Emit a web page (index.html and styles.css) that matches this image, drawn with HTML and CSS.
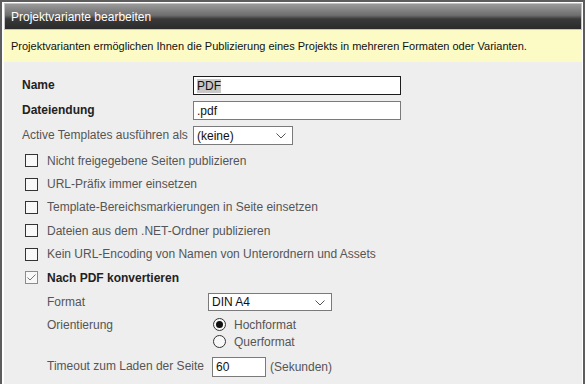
FILE: index.html
```html
<!DOCTYPE html>
<html lang="de">
  <head>
    <meta charset="UTF-8" />
    <title>Projektvariante bearbeiten</title>
    <link rel="stylesheet" href="styles.css">
  </head>
  <body>
    <div class="panel">
      <div class="title">Projektvariante bearbeiten</div>
      <div class="info">Projektvarianten ermöglichen Ihnen die Publizierung eines Projekts in mehreren Formaten oder Varianten.</div>
      <div class="form">
        <div class="fields">
          <label class="strong">Name</label>
          <div class="field focused wide"><span class="sel">PDF</span></div>
          <label class="strong">Dateiendung</label>
          <div class="field wide">.pdf</div>
          <label>Active Templates ausführen als</label>
          <div class="field select small">(keine)
            <svg class="chev" width="10" height="6" viewBox="0 0 10 6"><path d="M0.5 0.5 L5 5 L9.5 0.5" fill="none" stroke="#555" stroke-width="1"/></svg>
          </div>
        </div>

        <div class="checks">
          <div class="check"><span class="box"></span>Nicht freigegebene Seiten publizieren</div>
          <div class="check"><span class="box"></span>URL-Präfix immer einsetzen</div>
          <div class="check"><span class="box"></span>Template-Bereichsmarkierungen in Seite einsetzen</div>
          <div class="check"><span class="box"></span>Dateien aus dem .NET-Ordner publizieren</div>
          <div class="check"><span class="box"></span>Kein URL-Encoding von Namen von Unterordnern und Assets</div>
          <div class="check strong"><span class="box checked">
            <svg width="9" height="7" viewBox="0 0 9 7"><path d="M0.5 3.5 L3 6 L8.5 0.5" fill="none" stroke="#777" stroke-width="1"/></svg>
          </span>Nach PDF konvertieren</div>
        </div>

        <div class="sub">
          <label>Format</label>
          <div class="field select format">DIN A4
            <svg class="chev" width="10" height="6" viewBox="0 0 10 6"><path d="M0.5 0.5 L5 5 L9.5 0.5" fill="none" stroke="#555" stroke-width="1"/></svg>
          </div>
          <label class="top">Orientierung</label>
          <div class="radios">
            <div class="radio"><span class="dot on"></span>Hochformat</div>
            <div class="radio"><span class="dot"></span>Querformat</div>
          </div>
          <label>Timeout zum Laden der Seite</label>
          <div class="timeout">
            <div class="field num">60</div>
            <span class="unit">(Sekunden)</span>
          </div>
        </div>
      </div>
    </div>
  </body>
</html>
```

FILE: styles.css
```css
* {
  margin: 0;
  padding: 0;
  box-sizing: border-box;
}
body {
  font-family: "Liberation Sans", Arial, sans-serif;
  font-size: 12px;
  background: #fff;
  color: #555;
}
.panel {
  width: 585px;
  height: 384px;
  border: 2px solid #5d5d5d;
  border-bottom: none;
  padding: 1px 1px 0 2px;
  background: #fff;
  display: flex;
  flex-direction: column;
}
.title {
  height: 27px;
  border: 1px solid #c4c4c4;
  background: linear-gradient(#9a9a9a, #6e6e6e 45%, #3a3a3a 60%, #2b2b2b);
  color: #fff;
  padding-left: 6px;
  line-height: 27px;
  font-size: 12px;
}
.info {
  height: 32px;
  background: #fcfac5;
  color: #111;
  padding-left: 7px;
  line-height: 32px;
  font-size: 11px;
}
.form {
  flex: 1;
  background: #eeeeee;
  padding: 14px 0 0 18px;
}
.fields {
  display: grid;
  grid-template-columns: 171px auto;
  row-gap: 6px;
  align-items: center;
}
.fields label {
  line-height: 19px;
}
.strong {
  font-weight: bold;
  color: #222;
}
.field {
  height: 19px;
  background: #fff;
  border: 1px solid #7a7a7a;
  color: #111;
  padding-left: 3px;
  line-height: 18px;
  position: relative;
}
.field.wide {
  width: 208px;
}
.field.focused {
  border-color: #1c1c1c;
}
.sel {
  background: #c8c8c8;
}
.field.small {
  width: 100px;
}
.chev {
  position: absolute;
  right: 6px;
  top: 6px;
}
.checks {
  padding-top: 4px;
  padding-left: 3px;
}
.check {
  height: 23.4px;
  display: flex;
  align-items: center;
}
.box {
  width: 13px;
  height: 13px;
  border: 1px solid #333;
  background: #f8f8f8;
  margin-right: 9px;
  display: flex;
  align-items: center;
  justify-content: center;
}
.box.checked {
  border-color: #8c8c8c;
}
.sub {
  display: grid;
  grid-template-columns: 162px auto;
  padding: 4px 0 0 25px;
  row-gap: 5px;
  align-items: center;
}
.field.format {
  width: 124px;
  height: 18px;
  margin-left: -1px;
  line-height: 17px;
}
.top {
  align-self: start;
  line-height: 19px;
}
.radios {
  padding-left: 4px;
}
.radio {
  height: 17px;
  display: flex;
  align-items: center;
}
.dot {
  width: 13px;
  height: 13px;
  border: 1px solid #333;
  border-radius: 50%;
  background: #f8f8f8;
  margin-right: 8px;
  display: flex;
  align-items: center;
  justify-content: center;
}
.dot.on::after {
  content: "";
  width: 7px;
  height: 7px;
  border-radius: 50%;
  background: #111;
}
.timeout {
  display: flex;
  align-items: center;
  margin-top: 2px;
}
.field.num {
  width: 54px;
  height: 20px;
  margin-left: 3px;
  margin-right: 4px;
  line-height: 19px;
}
```
